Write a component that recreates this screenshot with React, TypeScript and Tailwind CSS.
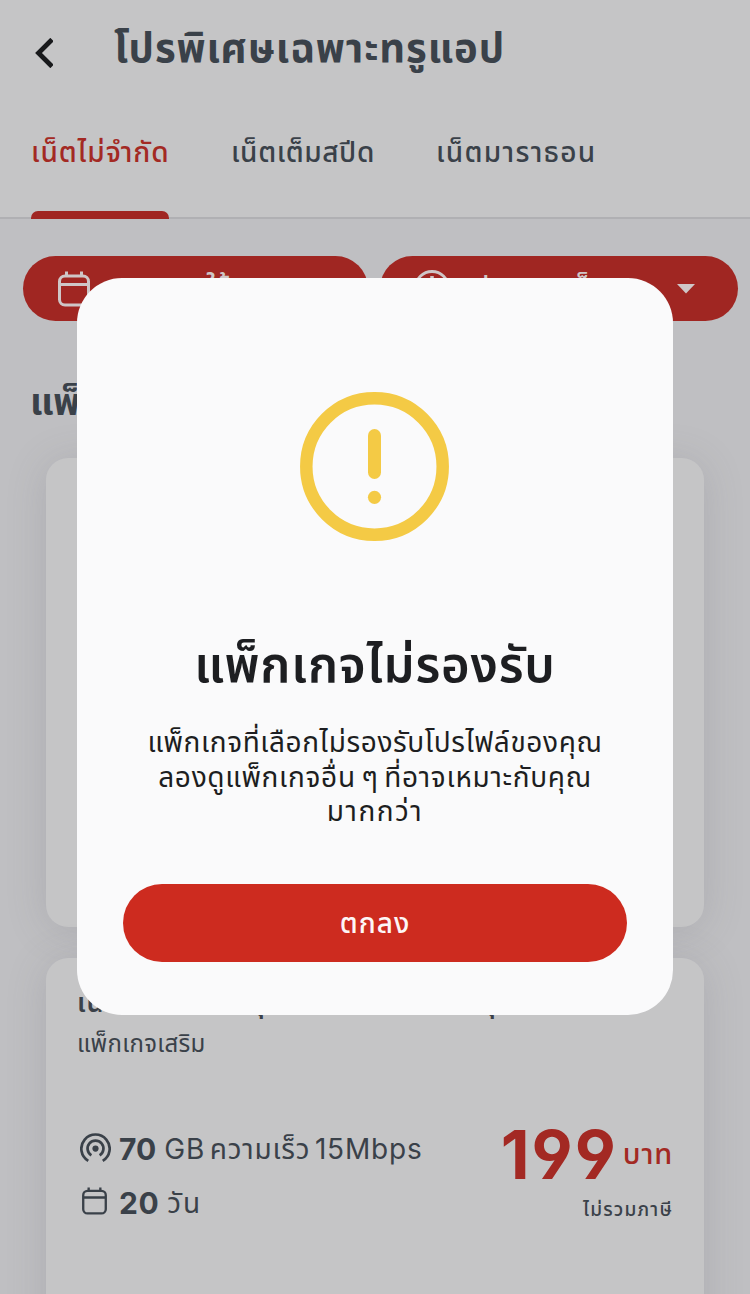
import React from 'react';

interface TabItem {
  label: string;
  active?: boolean;
  className: string;
}

const tabs: TabItem[] = [
  { label: 'เน็ตไม่จำกัด', active: true, className: 'w-[138px] tracking-[0.9px]' },
  { label: 'เน็ตเต็มสปีด', className: 'w-[143px] tracking-[0.6px]' },
  { label: 'เน็ตมาราธอน', className: 'w-[160px] tracking-[1.3px]' },
];

const CalendarIcon: React.FC<{ className?: string; strokeWidth?: number }> = ({
  className,
  strokeWidth = 3,
}) => (
  <svg viewBox="0 0 32 36" fill="none" stroke="currentColor" strokeWidth={strokeWidth} className={className}>
    <rect x="1.5" y="5" width="29" height="29" rx="5.5" />
    <path d="M1.5 13.5h29M8.5 0.5V5M23.5 0.5V5" />
  </svg>
);

const HotspotIcon: React.FC<{ className?: string }> = ({ className }) => (
  <svg viewBox="0 0 30 28" fill="none" stroke="currentColor" strokeWidth="2.6" className={className}>
    <circle cx="15" cy="15" r="3" fill="currentColor" stroke="none" />
    <path d="M11 21.6A7.7 7.7 0 1 1 19 21.6" />
    <path d="M8 26.9A13.7 13.7 0 1 1 22 26.9" />
  </svg>
);

const Header: React.FC = () => (
  <header className="h-[219px] shrink-0 flex flex-col bg-[#c5c5c6] border-b-2 border-[#b0b0b3]">
    <div className="h-[100px] flex items-start">
      <svg viewBox="0 0 18 30" className="w-[18px] h-[30px] mt-[38px] ml-[35px]" fill="none" stroke="#18191b" strokeWidth="4.8">
        <path d="M17 1.5L3.5 15L17 28.5" />
      </svg>
      <h1 className="ml-[61px] mt-[18px] text-[40px] leading-[60px] font-bold tracking-[0.9px] whitespace-nowrap">
        โปรพิเศษเฉพาะทรูแอป
      </h1>
    </div>
    <nav className="flex flex-1 pl-[31px] gap-[62px]">
      {tabs.map((tab) => (
        <div key={tab.label} className={`flex flex-col justify-between -mb-0.5 ${tab.className}`}>
          <span
            className={`mt-[30px] text-[28px] leading-[44px] font-medium whitespace-nowrap ${tab.active ? 'text-[#a32923]' : ''}`}
          >
            {tab.label}
          </span>
          {tab.active && <div className="h-2 rounded-t-[7px] bg-[#a02622]" />}
        </div>
      ))}
    </nav>
  </header>
);

const Filters: React.FC = () => (
  <div className="flex gap-[12px] mt-[37px] ml-[23px] text-[#cfc6c7] font-medium">
    <button className="w-[345px] h-[65px] rounded-full bg-[#a02622] flex items-center pl-[35px] text-[28px]">
      <CalendarIcon className="w-8 h-9" />
      <span className="ml-[16px] -mt-[6px] whitespace-nowrap">ระยะเวลาใช้งาน</span>
    </button>
    <button className="w-[358px] h-[65px] rounded-full bg-[#a02622] flex items-center pl-[34px] text-[27px]">
      <svg viewBox="0 0 36 36" className="w-9 h-9 -mt-0.5" fill="none" stroke="currentColor" strokeWidth="2.8">
        <circle cx="18" cy="18" r="16.5" />
        <path d="M18 6v12l6 5" strokeWidth="3.5" />
      </svg>
      <span className="ml-[7px] -mt-[5px] w-[205px] whitespace-nowrap tracking-[0.2px]">ประเภทแพ็กเกจ</span>
      <svg viewBox="0 0 18 10" className="w-[18px] h-[10px] ml-[15px]" fill="currentColor">
        <path d="M0 0H18L9 9.5Z" />
      </svg>
    </button>
  </div>
);

const PackageCard: React.FC = () => (
  <div className="h-[400px] rounded-[22px] bg-[#c5c5c6] shadow-[0_4px_40px_rgba(90,90,100,0.18)] pl-[31px] pr-[31px]">
    <h3 className="pt-[25px] text-[27px] leading-[40px] font-semibold whitespace-nowrap tracking-[0.9px]">
      เน็ตไม่จำกัด + คุ้มทั้งเดือนใช้งานได้ทุกที่
    </h3>
    <p className="mt-px text-[24px] leading-[40px] tracking-[0.3px] whitespace-nowrap">แพ็กเกจเสริม</p>
    <div className="flex justify-between mt-[58px]">
      <div className="flex flex-col text-[27px] tracking-[1px]">
        <div className="h-[54px] flex items-center whitespace-nowrap">
          <HotspotIcon className="w-[31px] h-[29px] ml-[3px] -mt-[4px]" />
          <b className="ml-[8px] text-[30px] tracking-normal">70</b>
          <span className="ml-[8px] text-[28px] tracking-[0.8px] [word-spacing:-4px]">GB ความเร็ว 15Mbps</span>
        </div>
        <div className="h-[54px] flex items-center whitespace-nowrap">
          <CalendarIcon className="w-[25px] h-[28px] ml-[5px] -mt-[4px]" />
          <b className="ml-[12px] text-[30px] tracking-[0.5px]">20</b>
          <span className="ml-[8px] text-[28px] tracking-[2px]">วัน</span>
        </div>
      </div>
      <div className="flex flex-col items-end">
        <div className="flex items-center h-[64px] text-[#a32923]">
          <span className="mt-px text-[67px] leading-[64px] font-bold tracking-[2px] [font-feature-settings:'cv04']">199</span>
          <span className="ml-[5px] text-[29px] font-medium tracking-[0.8px]">บาท</span>
        </div>
        <span className="mt-[4px] text-[19px] leading-[40px] font-medium tracking-[1.2px]">ไม่รวมภาษี</span>
      </div>
    </div>
  </div>
);

const Dialog: React.FC = () => (
  <div className="absolute top-[278px] left-[77px] w-[596px] h-[737px] rounded-[45px] bg-[#fafafb] text-[#1d1e21] flex flex-col items-center">
    <svg viewBox="0 0 149 149" className="w-[149px] h-[149px] mt-[114px] mr-px">
      <circle cx="74.5" cy="74.5" r="68.2" fill="none" stroke="#f4ca45" strokeWidth="12.5" />
      <rect x="68" y="37" width="13" height="50" rx="6.5" fill="#f4ca45" />
      <circle cx="74.5" cy="105.3" r="6.6" fill="#f4ca45" />
    </svg>
    <h2 className="mt-[86px] text-[49px] leading-[76px] font-semibold tracking-[0.8px] whitespace-nowrap">แพ็กเกจไม่รองรับ</h2>
    <p className="mt-[22px] flex flex-col items-center text-[28px] leading-[34.5px] whitespace-nowrap">
      <span className="tracking-[0.6px]">แพ็กเกจที่เลือกไม่รองรับโปรไฟล์ของคุณ</span>
      <span className="tracking-[0.7px] [word-spacing:-3px]">ลองดูแพ็กเกจอื่น ๆ ที่อาจเหมาะกับคุณ</span>
      <span className="tracking-[1.5px]">มากกว่า</span>
    </p>
    <button className="mt-auto mb-[53px] w-[504px] h-[78px] rounded-full bg-[#cd2b1f] text-[#fdf6f6] text-[28px] font-medium tracking-[1px]">
      ตกลง
    </button>
  </div>
);

const App: React.FC = () => {
  return (
    <div className="relative w-[750px] h-[1294px] overflow-hidden flex flex-col bg-[#bfbfc2] text-[#3a4149] font-['Inter','Noto_Sans_Thai','Noto_Sans',sans-serif]">
      <Header />
      <Filters />
      <h2 className="mt-[51px] ml-[30px] text-[37px] leading-[60px] font-bold">แพ็กเกจแนะนำ</h2>
      <div className="mt-[26px] ml-[46px] w-[658px] flex flex-col gap-[31px]">
        <div className="h-[469px] rounded-[22px] bg-[#c5c5c6] shadow-[0_4px_40px_rgba(90,90,100,0.18)]" />
        <PackageCard />
      </div>
      <Dialog />
    </div>
  );
};

export default App;
